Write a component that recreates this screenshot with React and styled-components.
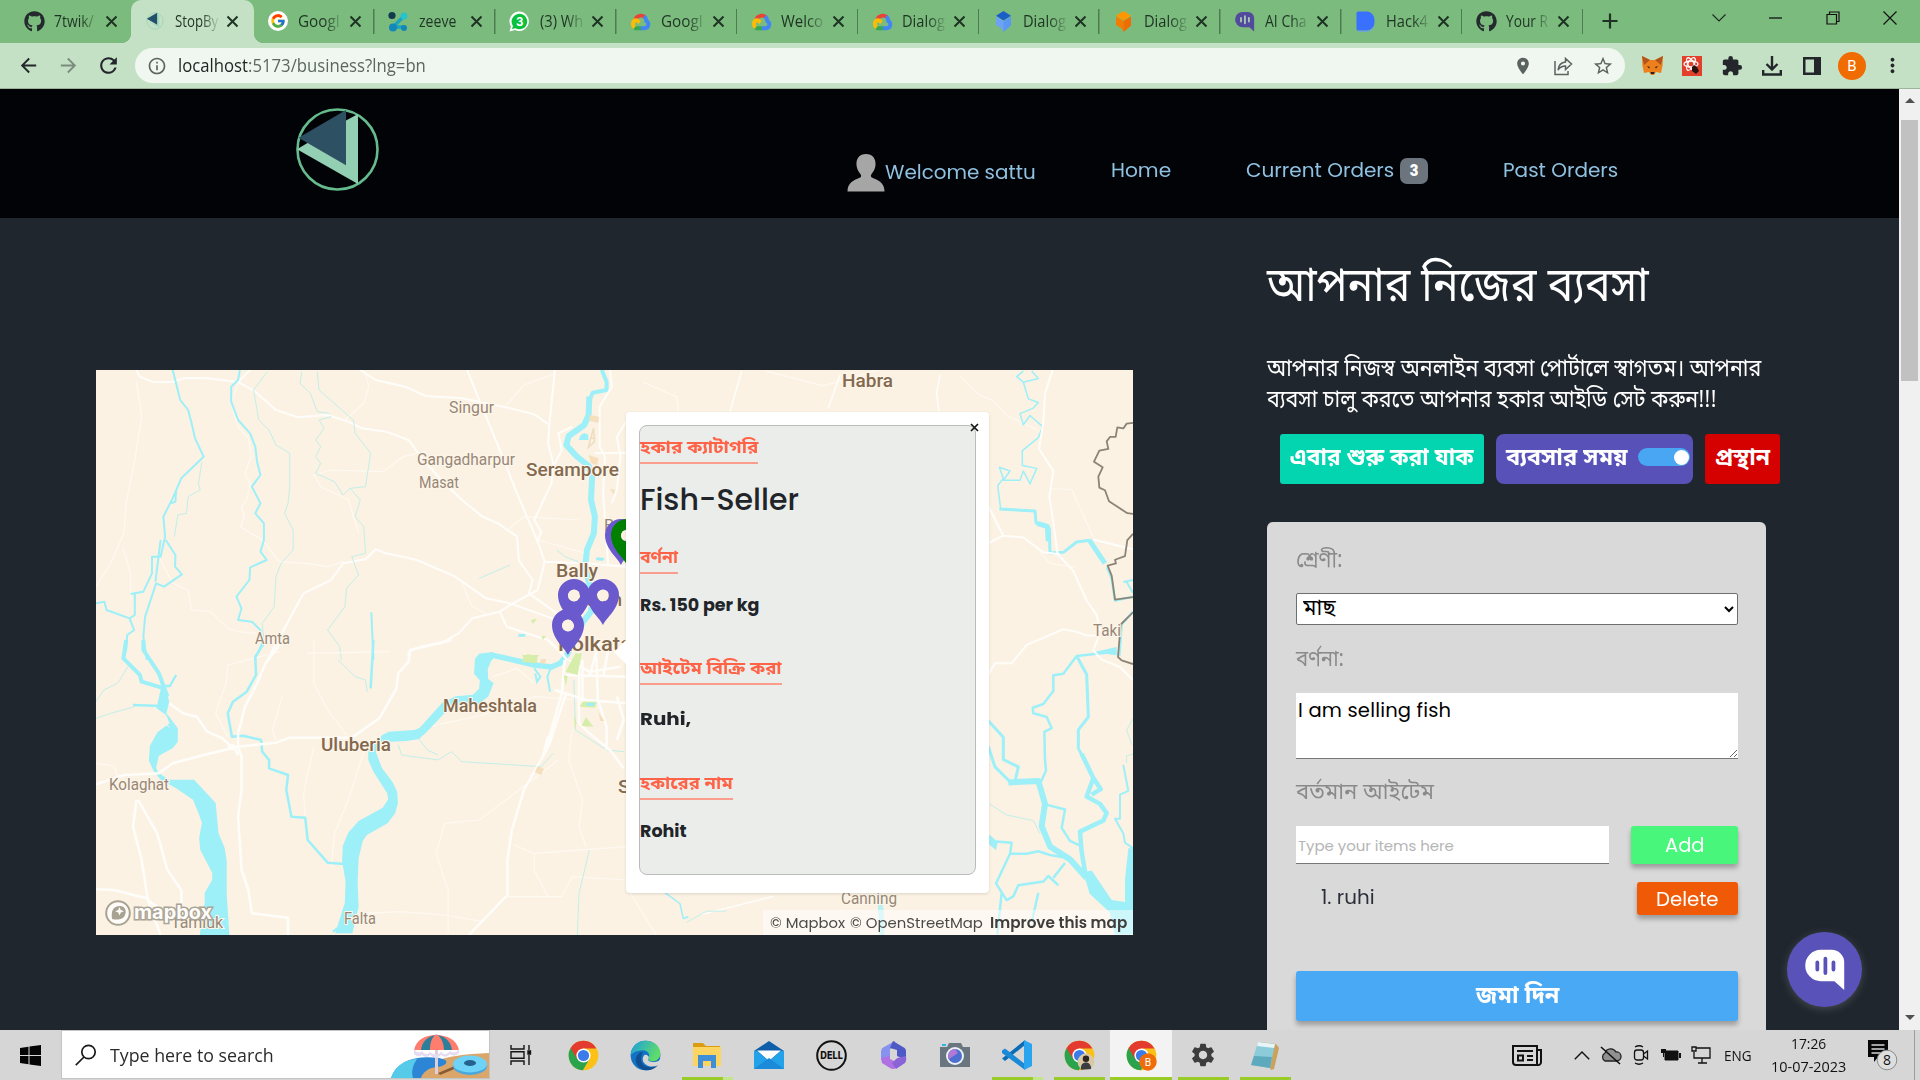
import React, { useLayoutEffect, useRef, useState } from "react";
import styled, { createGlobalStyle, css } from "styled-components";
import { FaGithub } from "react-icons/fa";
import { FcGoogle } from "react-icons/fc";
import {
  MdArrowBack,
  MdArrowForward,
  MdRefresh,
  MdInfoOutline,
  MdLocationOn,
  MdStarBorder,
  MdExtension,
  MdMoreVert,
  MdSettings,
} from "react-icons/md";

const poppins = `Poppins, Inter, "Nirmala UI", "Noto Sans Bengali", sans-serif`;
const bengali = `"Nirmala UI", "Noto Sans Bengali", "Noto Sans", sans-serif`;
const segoe = `"Segoe UI", "Open Sans", "Noto Sans", sans-serif`;

const GlobalStyle = createGlobalStyle`
  * { box-sizing: border-box; }
  html, body { margin: 0; padding: 0; overflow: hidden; background: #20262e; }
  body { font-family: ${poppins}; }
  svg { display: block; flex: none; }
`;

/* ---------- text set to an exact measure ---------- */

const Measure = styled.span`
  display: inline-block;
  width: ${(p) => p.$w}px;
  white-space: nowrap;
  text-align: left;
  vertical-align: baseline;
`;
const Glyphs = styled.span`
  display: inline-block;
  white-space: nowrap;
  transform-origin: 0 50%;
`;

function Fit({ w, children }) {
  const ref = useRef(null);
  const [scale, setScale] = useState(1);
  useLayoutEffect(() => {
    const natural = ref.current.offsetWidth;
    if (natural) setScale(w / natural);
  }, [w]);
  return (
    <Measure $w={w}>
      <Glyphs ref={ref} style={{ transform: `scaleX(${scale})` }}>
        {children}
      </Glyphs>
    </Measure>
  );
}

/* ---------- browser chrome ---------- */

const Screen = styled.div`
  width: 1920px;
  height: 1080px;
  display: flex;
  flex-direction: column;
  overflow: hidden;
  position: relative;
`;
const TabStrip = styled.div`
  height: 43px;
  flex: none;
  background: #7bbb7d;
  display: flex;
  padding-left: 10px;
`;
const TabItem = styled.div`
  width: ${(p) => p.$w || 120.85}px;
  height: 43px;
  flex: none;
  display: flex;
  align-items: center;
  padding: 0 0 1px 14px;
  position: relative;
  font: 16px/24px ${segoe};
  color: #1f3324;
  ${(p) =>
    p.$active &&
    css`
      width: 123px;
      background: #c5e1c5;
      border-radius: 10px 10px 0 0;
      &::before,
      &::after {
        content: "";
        position: absolute;
        bottom: 0;
        width: 10px;
        height: 10px;
      }
      &::before {
        left: -10px;
        background: radial-gradient(circle at 0 0, transparent 10px, #c5e1c5 10.5px);
      }
      &::after {
        right: -10px;
        background: radial-gradient(circle at 100% 0, transparent 10px, #c5e1c5 10.5px);
      }
    `}
  ${(p) =>
    p.$rule &&
    css`
      background: linear-gradient(#4d7c52, #4d7c52) right 9px / 1.5px 25px no-repeat;
    `}
`;
const TabTitle = styled.span`
  width: 44px;
  margin-left: 10px;
  white-space: nowrap;
  height: 24px;
  ${(p) =>
    !p.$whole &&
    css`
      -webkit-mask-image: linear-gradient(90deg, #000 60%, rgba(0, 0, 0, 0.15) 97%);
      mask-image: linear-gradient(90deg, #000 60%, rgba(0, 0, 0, 0.15) 97%);
    `}
`;
const TabClose = styled.svg`
  margin-left: 7px;
`;
const WindowTools = styled.div`
  display: flex;
  flex: 1;
`;
const WindowButton = styled.div`
  width: 57px;
  height: 36px;
  flex: none;
  display: flex;
  align-items: center;
  justify-content: center;
`;
const NewTab = styled.div`
  width: 54px;
  height: 42px;
  flex: none;
  margin-right: 53px;
  display: flex;
  align-items: center;
  justify-content: center;
`;
const Toolbar = styled.div`
  height: 46px;
  flex: none;
  background: #c5e1c5;
  border-bottom: 1px solid #9bb49b;
  display: flex;
  align-items: center;
  padding-left: 8px;
  color: #23272b;
`;
const ToolIcon = styled.div`
  width: 40px;
  height: 40px;
  display: flex;
  align-items: center;
  justify-content: center;
  flex: none;
  opacity: ${(p) => (p.$dim ? 0.45 : 1)};
`;
const Omnibox = styled.div`
  width: 1490px;
  height: 35px;
  flex: none;
  border-radius: 18px;
  background: #f0f7f0;
  display: flex;
  align-items: center;
  padding: 0 2px 0 12px;
  margin: 0 7px;
  color: #5b6360;
`;
const Address = styled.div`
  flex: 1;
  margin-left: 11px;
  margin-top: -2px;
  font: 18px/26px ${segoe};
  color: #5d6661;
  b {
    font-weight: 400;
    color: #1d2421;
  }
`;
const Avatar = styled.div`
  width: 28px;
  height: 28px;
  border-radius: 50%;
  background: #f06c00;
  color: #fff;
  font: 15px/28px Roboto, sans-serif;
  text-align: center;
`;

/* ---------- page ---------- */

const Viewport = styled.div`
  height: 941px;
  flex: none;
  display: flex;
  overflow: hidden;
`;
const Page = styled.div`
  width: 1899px;
  flex: none;
  background: #20262e;
  overflow: hidden;
`;
const NavBar = styled.header`
  height: 129px;
  background: #010307;
  display: flex;
  align-items: flex-start;
  padding: 18px 0 0 295px;
`;
const NavLinks = styled.nav`
  display: flex;
  align-items: center;
  margin: 45px 0 0 468px;
  color: #8fc1e0;
  font: 19.5px/30px ${poppins};
`;
const NavLink = styled.a`
  display: flex;
  align-items: center;
  padding-top: ${(p) => p.$drop || 0}px;
  margin-right: ${(p) => p.$gap}px;
  height: 38px;
`;
const Badge = styled.span`
  width: 28px;
  height: 26px;
  border-radius: 7px;
  margin-left: 6px;
  background: #6c757d;
  color: #fff;
  font: 700 15px/26px ${poppins};
  text-align: center;
`;
const Main = styled.main`
  display: flex;
  align-items: flex-start;
`;
const MapFrame = styled.section`
  width: 1037px;
  height: 565px;
  margin: 152px 134px 0 96px;
  flex: none;
  position: relative;
  overflow: hidden;
  background: #fbf2e4;
`;
const Popup = styled.article`
  position: absolute;
  left: 530px;
  top: 42px;
  width: 363px;
  height: 481px;
  background: #fff;
  border-radius: 4px;
  padding: 13px 13px 0;
  box-shadow: 0 1px 3px rgba(0, 0, 0, 0.12);
  &::before {
    content: "";
    position: absolute;
    left: -12px;
    top: 228px;
    border: 12px solid transparent;
    border-left: 0;
    border-right-color: #fff;
  }
`;
const PopupClose = styled.svg`
  position: absolute;
  right: 10px;
  top: 11px;
`;
const PopupBody = styled.div`
  width: 337px;
  height: 450px;
  background: #ebedea;
  border: 1.5px solid #babcba;
  border-radius: 8px;
  color: #212529;
`;
const PopupLabel = styled.div`
  height: ${(p) => p.$h}px;
  padding-top: ${(p) => p.$top}px;
  font: 700 18px/26px ${bengali};
  color: #ff6347;
`;
const PopupRule = styled.span`
  display: inline-block;
  border-bottom: 2px solid #fa9d8c;
  height: 29px;
`;
const PopupValue = styled.div`
  height: ${(p) => p.$h}px;
  padding-top: ${(p) => p.$top || 0}px;
  font: ${(p) => (p.$large ? "500 30px/36px " : "700 17.5px/24px ")} ${poppins};
`;
const Attribution = styled.div`
  position: absolute;
  right: 0;
  bottom: 0;
  width: 370px;
  height: 25px;
  background: rgba(255, 255, 255, 0.5);
  font: 15px/25px ${poppins};
  color: #4b4a48;
  padding-left: 7px;
  display: flex;
  gap: 5px;
  b {
    font-weight: 600;
    margin-left: 2px;
    color: #3f3e3c;
  }
`;
const Side = styled.section`
  width: 520px;
  flex: none;
`;
const Title = styled.h1`
  margin: 0;
  height: 129px;
  padding-top: 35px;
  font: 400 48.5px/72px ${bengali};
  color: #fff;
`;
const Intro = styled.p`
  margin: 0;
  height: 87px;
  padding-top: 8px;
  font: 24px/31px ${bengali};
  color: #fff;
`;
const Actions = styled.div`
  display: flex;
  gap: 12px;
  margin: 0 0 38px 13px;
`;
const ActionButton = styled.button`
  width: ${(p) => p.$w}px;
  height: 50px;
  flex: none;
  border: 0;
  padding: 0 0 4px 10px;
  border-radius: ${(p) => p.$r || 3}px;
  background: ${(p) => p.$bg};
  color: #fff;
  font: 700 23px/34px ${bengali};
  display: flex;
  align-items: center;
`;
const ActionText = styled.span`
  padding-top: 4px;
`;
const Toggle = styled.span`
  width: 52px;
  height: 18px;
  border-radius: 9px;
  background: #49a6f3;
  margin-left: 10px;
  padding-right: 1px;
  display: flex;
  justify-content: flex-end;
  align-items: center;
  &::after {
    content: "";
    width: 15px;
    height: 15px;
    border-radius: 50%;
    background: #fff;
  }
`;
const Card = styled.form`
  width: 499px;
  height: 560px;
  background: #d9d9d9;
  border-radius: 6px;
  padding: 0 28px 0 29px;
`;
const FieldLabel = styled.label`
  display: block;
  height: ${(p) => p.$h}px;
  padding-top: ${(p) => p.$top}px;
  font: 23px/34px ${bengali};
  color: #8a8a8a;
`;
const Select = styled.select`
  display: block;
  width: 442px;
  height: 32px;
  border: 1px solid #6f6f6f;
  border-radius: 2px;
  background: #fff;
  color: #000;
  padding: 0 0 0 2px;
  font: 22px/28px ${bengali};
`;
const TextArea = styled.textarea`
  display: block;
  width: 442px;
  height: 66px;
  border: 0;
  border-bottom: 1px solid #777;
  outline: 0;
  padding: 3px 2px 2px;
  margin: 0;
  font: 19.5px/30px ${poppins};
  letter-spacing: 0.2px;
  color: #000;
`;
const Row = styled.div`
  display: flex;
  justify-content: space-between;
  align-items: flex-start;
  margin-bottom: ${(p) => p.$mb}px;
`;
const Input = styled.input`
  width: 313px;
  height: 38px;
  border: 0;
  border-bottom: 1px solid #777;
  padding: 2px 2px 0;
  font: 15px/24px ${poppins};
  letter-spacing: -0.05px;
  &::placeholder {
    color: #b5b5b5;
    opacity: 1;
  }
`;
const SolidButton = styled.button`
  width: ${(p) => p.$w}px;
  height: ${(p) => p.$h}px;
  border: 0;
  padding: ${(p) => p.$drop || 0}px 0 0;
  border-radius: 3px;
  background: ${(p) => p.$bg};
  color: #fff;
  box-shadow: 0 4px 5px rgba(0, 0, 0, 0.28);
  font: ${(p) => (p.$strong ? `700 23px/34px ${bengali}` : `20px/28px ${poppins}`)};
  display: flex;
  justify-content: center;
  align-items: center;
`;
const Item = styled.span`
  margin: 1px 0 0 25px;
  font: 19.5px/30px ${poppins};
  color: #2b2f38;
`;
const ChatButton = styled.button`
  position: absolute;
  left: 1787px;
  top: 932px;
  width: 75px;
  height: 75px;
  padding: 0;
  border: 0;
  border-radius: 50%;
  background: #5953b9;
  box-shadow: 0 2px 8px rgba(130, 130, 130, 0.4);
`;
const GlyphHolder = styled.span`
  display: flex;
  justify-content: center;
`;
const Scrollbar = styled.div`
  width: 21px;
  background: #f0f0f0;
  display: flex;
  flex-direction: column;
  align-items: center;
`;
const ScrollArrow = styled.div`
  width: 0;
  height: 0;
  border: 5px solid transparent;
  ${(p) =>
    p.$up
      ? css`
          margin: 6px 0 17px;
          border-bottom-color: #505050;
          border-top-width: 3px;
          height: 8px;
        `
      : css`
          margin-top: 634px;
          border-top-color: #505050;
        `}
`;
const ScrollThumb = styled.div`
  width: 17px;
  height: 261px;
  background: #c1c1c1;
`;

/* ---------- taskbar ---------- */

const Taskbar = styled.footer`
  height: 50px;
  flex: none;
  background: #d6d6d6;
  display: flex;
  color: #111;
  font: 15px/20px ${segoe};
`;
const StartCell = styled.div`
  width: 61px;
  flex: none;
  display: flex;
  align-items: center;
  justify-content: center;
`;
const SearchBox = styled.div`
  width: 429px;
  height: 49px;
  flex: none;
  background: #fff;
  border: 1px solid #c4c4c4;
  display: flex;
  align-items: center;
  padding-left: 13px;
  font: 18px/26px ${segoe};
  color: #2b2b2b;
`;
const SearchText = styled.span`
  margin: 0 auto 0 13px;
`;
const AppCell = styled.div`
  width: 62px;
  height: 50px;
  flex: none;
  display: flex;
  align-items: center;
  justify-content: center;
  background: ${(p) =>
    p.$mark === "front"
      ? "linear-gradient(#9acc28,#9acc28) 0 47px / 62px 3px no-repeat, #f3f3f3"
      : p.$mark === "run"
      ? "linear-gradient(#9acc28,#9acc28) 6px 47px / 51px 3px no-repeat"
      : p.$mark === "many"
      ? "linear-gradient(#9acc28,#9acc28) 6px 47px / 41px 3px no-repeat, linear-gradient(#c3e68a,#c3e68a) 47px 47px / 10px 3px no-repeat"
      : "none"};
`;
const Tray = styled.div`
  display: flex;
  align-items: center;
  flex: none;
  margin-left: 203px;
`;
const TrayCell = styled.div`
  width: ${(p) => p.$w || 30}px;
  display: flex;
  justify-content: center;
`;
const Clock = styled.div`
  width: 96px;
  line-height: 23px;
  display: flex;
  flex-direction: column;
  align-items: center;
`;
const DesktopEdge = styled.div`
  height: 50px;
  margin-left: 6px;
  border-left: 1px solid #9c9c9c;
`;

/* ---------- icons ---------- */

const CloudIcon = () => (
  <svg width="21" height="21" viewBox="0 0 24 24" fill="none" strokeWidth="4.4">
    <path d="M6 9.5A7 7 0 0 1 17 7" stroke="#ea4335" />
    <path d="M16 6.2c3 2 2.4 4 2.6 5.200 3.600 1.800 3 8.300-2 8.300H12" stroke="#4285f4" />
    <path d="M12.500 19.700H6.500l-2-1" stroke="#34a853" />
    <path d="M5.500 18.800C1.500 16 3.500 9.500 8 10.800l3 2.200" stroke="#fbbc05" />
  </svg>
);
const ZeeveIcon = () => (
  <svg width="21" height="21" viewBox="0 0 21 21">
    <path d="M5 16 16 5M6 16h10" stroke="#1aa5bd" strokeWidth="3.500" />
    <circle cx="4" cy="4.500" r="3.600" fill="#123a4c" />
    <circle cx="16" cy="5" r="3.500" fill="#28c3c9" />
    <circle cx="5" cy="16.500" r="4" fill="#1387b8" />
    <circle cx="16" cy="17" r="3" fill="#1387b8" />
  </svg>
);
const WhatsIcon = () => (
  <svg width="21" height="21" viewBox="0 0 21 21">
    <path d="M.5 20.500 2 15.500A9.700 9.700 0 1 1 6 19z" fill="#fff" />
    <path d="M3 18l1-3a7.800 7.800 0 1 1 2.500 2.300z" fill="#0ac03c" />
    <text x="10.700" y="14.500" fontFamily="Inter" fontWeight="700" fontSize="11.500" fill="#fff" textAnchor="middle">3</text>
  </svg>
);
const DialogIcon = ({ a, b, c }) => (
  <svg width="21" height="21" viewBox="0 0 21 21">
    <path d="M10.500 0 18 4.700 10.500 9.500 3 4.700z" fill={a} />
    <path d="M3 5.500 10.500 10V21L8.500 17.500 3 14z" fill={b} />
    <path d="M18 5.500 10.500 10V21L18 14.500z" fill={c} />
  </svg>
);
const BubbleIcon = ({ size = 21, body = "#514a9d", bars = "#a9c9b5" }) => (
  <svg width={size} height={size} viewBox="0 0 48 48">
    <path d="M20 2h12a14 14 0 0 1 14 14v31L35 37H20A17.500 17.500 0 0 1 20 2z" fill={body} />
    <path d="M16 16v8M25 12v16M34 16v8" stroke={bars} strokeWidth="4.200" strokeLinecap="round" />
  </svg>
);
const DevIcon = () => (
  <svg width="19" height="21" viewBox="0 0 19 21">
    <path d="M2 .5h8a8 8 0 0 1 8.500 8v3a8 8 0 0 1-8.500 8H2A1.500 1.500 0 0 1 .5 18V2A1.500 1.500 0 0 1 2 .5z" fill="#3970fd" />
    <path d="M2 20.300h9a8 8 0 0 0 7-5" fill="none" stroke="#6da3ee" />
  </svg>
);
const PageMark = () => (
  <svg width="18" height="18" viewBox="0 0 84 84">
    <circle cx="42" cy="42" r="38" fill="#c5e1c5" stroke="#9ad4b6" strokeWidth="4" />
    <path d="M4 42 62 74V16l-10-6v52z" fill="#a3dabd" />
    <path d="M4 32 52 4v56z" fill="#23506b" />
  </svg>
);
const CloseX = () => (
  <TabClose width="13" height="13" viewBox="0 0 13 13" stroke="#1f3324" strokeWidth="2">
    <path d="M1.500 1.500l10 10M11.500 1.500l-10 10" />
  </TabClose>
);
const Logo = () => (
  <svg width="84" height="84" viewBox="295 107 84 84">
    <circle cx="337.500" cy="149.500" r="40" fill="none" stroke="#66bb8e" strokeWidth="2.600" />
    <path d="M358 114v70l-61-34.700 10.500-6.300 38.500-22.500z" fill="#93cfb3" />
    <path d="M298.500 137.700 346 110v55.300z" fill="#2d5063" />
  </svg>
);
const Person = () => (
  <svg width="38" height="38" viewBox="0 0 38 38" fill="#a6a6a6">
    <path d="M19 0c6.500 0 10 4.500 9.500 11-.4 5-3 7.500-4.500 10-.5 2 .5 2.600 3 3.500 7 2.600 10.500 6.500 10.500 13H.5c0-6.500 3.500-10.400 10.500-13 2.500-.9 3.500-1.500 3-3.500-1.500-2.500-4.100-5-4.500-10C9 4.500 12.500 0 19 0z" />
  </svg>
);
const ChromeIcon = ({ size = 31, children }) => (
  <svg width={size} height={size} viewBox="0 0 48 48">
    <circle cx="24" cy="24" r="23" fill="#fbc116" />
    <path d="M4 12.500A23 23 0 0 0 23 47l10.500-18L24 24z" fill="#2ba24c" />
    <path d="M4 12.500 14 29.500 24 13h20A23 23 0 0 0 4 12.500z" fill="#e33b2e" />
    <circle cx="24" cy="24" r="11" fill="#fff" />
    <circle cx="24" cy="24" r="8.700" fill="#3b7bea" />
    {children}
  </svg>
);
const EdgeIcon = () => (
  <svg width="31" height="31" viewBox="0 0 48 48">
    <defs>
      <linearGradient id="eg" x1="0" x2="1" y1="0" y2=".4">
        <stop offset="0" stopColor="#1b9de2" />
        <stop offset="1" stopColor="#5fdc6a" />
      </linearGradient>
    </defs>
    <circle cx="24" cy="24" r="23" fill="#1272c4" />
    <path d="M1 24C2 9 12 1 24 1c13 0 23 8 23 20 0 8-6 12-12 12-5 0-8-2-6-5 3-6-2-12-9-12C9 16 2 22 1 24z" fill="url(#eg)" />
    <path d="M17 30c0 8 8 13 17 12 4 0 8-2 10-4-4 6-11 9-19 9C15 46 8 38 9 29c1-6 5-10 11-11-2 3-3 7-3 12z" fill="#114f93" />
    <path d="M29 28c-3 4 2 6 6 6 5 0 9-1 12-4l1 5-5 4c-8 4-20 2-23-7-1-4 1-8 3-9 5 0 7 3 6 5z" fill="#d6d6d6" />
  </svg>
);
const FolderIcon = () => (
  <svg width="30" height="28" viewBox="0 0 30 28">
    <path d="M1 2h10l3 3h14v7H1z" fill="#dc9c12" />
    <path d="M1 6h28v19H1z" fill="#fcd462" />
    <path d="M6 14h18v13h-5v-7h-8v7H6z" fill="#3f8fd8" />
  </svg>
);
const MailIcon = () => (
  <svg width="32" height="30" viewBox="0 0 32 30">
    <path d="M1 11 16 1l15 10v18H1z" fill="#0f5ea9" />
    <path d="M4 10.500h24L16 21z" fill="#fff" />
    <path d="M1 11l3-.3L16 21l12-10.300 3 .3v18H1z" fill="#23a2ea" />
    <path d="M1 29l15-11 15 11z" fill="#1b8bd9" />
  </svg>
);
const DellIcon = () => (
  <svg width="31" height="31" viewBox="0 0 31 31">
    <circle cx="15.500" cy="15.500" r="14.300" fill="none" stroke="#111" strokeWidth="2" />
    <text x="4.300" y="19.300" textLength="22.500" lengthAdjust="spacingAndGlyphs" fontFamily="Inter" fontWeight="800" fontSize="10.500" fill="#111">DELL</text>
  </svg>
);
const OfficeIcon = () => (
  <svg width="28" height="30" viewBox="0 0 28 30">
    <path d="M16 1 5 7a5 5 0 0 0-3 4v9l7-2 2-1V9l5-3z" fill="#8791ee" />
    <path d="M14 1l10 6c2 1 3 2 3 4v9l-9-4v-6l-7-2z" fill="#4f59c6" />
    <path d="M2 18l9-2 8 4 8-3v4l-10 7q-3 2-6 0L3 23z" fill="#b072e2" />
    <path d="M27 16l-9 2-5 5 4 6 9-6q2-3 1-7z" fill="#8a63d6" />
    <path d="M11 11l3-2 4 2v7l-3 3-4-2z" fill="#d6d6d6" />
  </svg>
);
const CameraIcon = () => (
  <svg width="32" height="27" viewBox="0 0 32 27">
    <path d="M10 1h12l2 4h7v20H1V5h7z" fill="#69757f" />
    <circle cx="16" cy="14" r="9" fill="#eef1f3" />
    <circle cx="16" cy="14" r="7" fill="#4c6fd0" />
    <path d="M16 7a7 7 0 0 0-6 10l9-6z" fill="#b178d8" />
    <path d="M3 2h4v2H3z" fill="#2fb5e8" />
  </svg>
);
const CodeIcon = () => (
  <svg width="32" height="32" viewBox="0 0 32 32">
    <path d="M1 19.500 4 22 24 6V1z" fill="#0b6db5" />
    <path d="M1 11.500 4 9.500 24 25v6L1 14z" fill="#1a8ad8" />
    <path d="M23 1l8 4v22l-8 4z" fill="#2aa4ee" />
  </svg>
);
const NotepadIcon = () => (
  <svg width="30" height="32" viewBox="0 0 30 32">
    <path d="M9 3 26 5l3 4-5 21-3 1z" fill="#c9a25e" />
    <path d="M8 3l17 2-5 24L1 26z" fill="#8ccbd9" />
    <path d="M8 3l17 2-1 4L7 7z" fill="#e8f5f7" />
    <path d="M4 17l18 1-2 11L1 26z" fill="#5da9bd" />
  </svg>
);
const BeachArt = () => (
  <svg width="98" height="47" viewBox="0 0 98 47">
    <path d="M28 47c2-14 20-23 70-25v25z" fill="#dba66a" />
    <path d="M0 47C6 30 24 24 48 27c12 2 8 8-2 9-9 1-14 5-16 11z" fill="#2c86d5" />
    <path d="M0 47C4 34 16 28 26 28c-4 6-6 12-4 19z" fill="#55cbe9" />
    <path d="M47 42 66 34v3L49 44z" fill="#8a5a33" />
    <path d="M44 3h3v40h-3z" fill="#ded0da" />
    <path d="M23 19C25 9 34 4 45 4s21 5 23 15z" fill="#ff7d6c" />
    <path d="M30 19c1-8 6-13 14-15-4 4-5 9-5 15zM47 4c8 2 13 7 14 15h-8c0-6-2-11-6-15z" fill="#2b7f9b" />
    <path d="M23 18q4 6 8 2 4 6 8 1 6 5 11 0 5 5 9-1 5 4 9-2v4q-5 5-9 1-4 5-9 1-5 5-11 0-4 4-8 0-4 3-8-1z" fill="#e6dcf2" />
    <ellipse cx="79" cy="35" rx="17" ry="9" fill="#45a8e0" />
    <ellipse cx="79" cy="33" rx="17" ry="8.500" fill="#6fd2f7" />
    <ellipse cx="79" cy="32" rx="6" ry="3" fill="#24618d" />
  </svg>
);

/* ---------- map drawing ---------- */

const MapSvg = styled.svg`
  path {
    vector-effect: non-scaling-stroke;
  }
  text {
    font-family: Roboto, "Noto Sans", sans-serif;
    paint-order: stroke;
    stroke: #fdf6ea;
    stroke-width: 2px;
  }
`;
const WATER = "#9deff8";
const Stream = ({ d, w = 1.5 }) => <path d={d} fill="none" stroke={WATER} strokeWidth={w} strokeLinejoin="round" />;
const Creek = ({ d }) => <path d={d} fill="none" stroke="#c3efe8" strokeWidth="1" />;
const Road = ({ d, w = 1.5 }) => <path d={d} fill="none" stroke="#fffdfa" strokeWidth={w} strokeLinejoin="round" />;
const Lane = ({ d }) => <path d={d} fill="none" stroke="#fef9f1" strokeWidth="1.200" />;
const Border = ({ d }) => <path d={d} fill="none" stroke="#8c8477" strokeWidth="1.800" strokeLinejoin="round" />;
const Place = ({ x, y, w, size = 16, bold, children }) => (
  <text x={x} y={y} textLength={w} lengthAdjust="spacingAndGlyphs" fontSize={size} fontWeight={bold ? 500 : 400} fill={bold ? "#84694e" : "#988776"}>
    {children}
  </text>
);
const Pin = ({ x, y, color = "#6a5acd" }) => (
  <g transform={`translate(${x} ${y})`}>
    <path
      fillRule="evenodd"
      fill={color}
      d="M0 0C-3-7-16-16-16-30a16 16 0 0 1 32 0C16-16 3-7 0 0zM0-35.500a6 6 0 1 0 0 12 6 6 0 0 0 0-12z"
    />
    <circle cx="0" cy="-29.500" r="5.800" fill="#fbf2e4" />
  </g>
);

const MapDrawing = () => (
  <MapSvg width="1037" height="565" viewBox="0 0 1037 565">
    <g transform="translate(-6 -10) scale(.34438 .33333)">
      <Lane d="M135 65 150 170 130 300 105 430 98 520 60 610 17 680M95 560 118 640 118 720M430 70 410 130 430 200 460 235 468 290 450 340 465 370 455 420 440 440 448 470 437 500 500 540 550 605 630 610 690 620 735 605M200 590 240 670 285 690 295 750 350 755 400 805 430 815 480 820M800 40 810 80 795 130 740 180 680 165M1350 40 1260 75 1210 135M650 345 700 330 850 335 910 290 975 275M650 345 670 380 750 420 780 520M1210 510 1260 470 1420 480M1300 540 1440 580M1080 670 1110 740 1150 760" />
      <Stream w={4} d="M1486 30 1500 65 1500 90 1460 98 1448 125" />
      <Stream w={6} d="M1450 110 1448 165 1435 195 1390 228 1383 255 1412 288 1448 318 1458 350 1455 420 1466 470 1463 520 1443 570 1438 620 1447 660 1458 710 1455 755 1432 785 1385 885" />
      <path d="M1425 225l10-6 12 5v16h-28zM1470 592l24 2-4 8-20-1zM1244 822h20v8h-20z" fill={WATER} />
      <Road w={2} d="M135 30 145 50 180 65 240 66 270 55 340 55 430 66 480 95 540 150 605 172 690 165 750 185 790 205 860 215 925 240 960 290 1020 360 1080 420 1140 470 1185 490 1240 530 1245 600 1285 660 1275 700 1380 778M430 66 465 30M785 30 830 60 915 80 975 108 1080 115 1200 140 1290 163 1335 195M1095 30 1130 120 1190 270 1240 400 1300 545 1320 605 1300 690 1220 735 1190 755 1110 775 1070 820 1020 850 960 860 925 875 925 900M1350 30 1335 180 1330 250 1345 310 1340 370 1290 480 1310 515 1300 545M1320 605 1440 610 1560 620M515 900 620 700 700 660 735 610 800 598 830 568 860 580 950 600 1060 650 1150 715 1220 730 1350 778M1190 755 1210 800 1330 840 1380 890M1510 30 1515 80 1480 140 1480 260 1495 290 1490 400 1505 620M1560 278 1465 280M1345 320 1370 270 1360 220 1400 200M1560 180 1530 230 1540 290 1530 390 1515 430" />
      <Creek d="M515 35 475 90 490 180 520 210 540 255 580 280 580 380 575 430 565 460 590 510 590 570 555 610 540 650 535 740 500 790 505 840M615 35 610 70 640 100 660 155 695 160M660 35 665 90 720 140 765 180 770 220 815 280 800 380 755 385 735 405 710 365 655 340 670 310 655 290 670 260 655 240 680 205 665 180 700 170M755 385 785 420 770 470 795 500 800 580 760 590 780 645 745 685 740 740 690 810 725 860 730 900M325 305 315 370 320 390 285 410 280 460 255 465 245 530M1130 655 1220 615M1355 570 1380 590 1430 610" />
      <Stream w={2} d="M240 30 250 70 262 120 285 150 295 190 305 235 330 290 265 355 240 415 213 470 218 530 205 590 180 590 180 640 155 695 118 702M220 540 248 585 247 620 267 643 215 680 192 670 160 770 155 830 165 900M250 390 248 425 235 430M17 730 42 725 48 750 115 775 128 810 108 825 105 870 95 900M130 702 130 765 115 775M205 540 190 665" />
      <Stream w={2} d="M435 30 430 60 410 80 410 125 430 180 465 220 480 260 485 305 495 345 470 380 495 430 480 460 505 490 505 540 495 575 513 600 465 622 463 660 425 710 440 745 430 780 470 785 495 810 500 850 478 900M817 757 823 900" />
      <path d="M1450 165l28 5-2 18-25-5zM1447 285l30 10-5 20-15-3zM1510 387l14 2-3 15z" fill="#f5dfbd" />
      <path d="M1462 205 1447 262 1465 245zM1455 235h12" fill="none" stroke="#eedcc0" strokeWidth="1.500" />
      <path d="M1280 780l18-4-12 16zM1255 885l50 0-15 15h-30zM1310 828l14 0-8 12z" fill="#d7edaa" />
    </g>
    <g transform="translate(-6 270) scale(.34438 .33333)">
      <Lane d="M550 35 400 75 395 130 365 220 400 290M650 0 650 130 690 210 745 285M630 40 870 35M558 170 530 270 540 300M650 320 620 460 625 530M800 320 750 480 710 580 700 680M17 370 70 378 80 410M1130 540 1360 360M1130 540 1030 550 1005 640 1040 750 1040 880M1230 615 1290 640 1560 620M1290 640 1290 690 1330 770M1210 770 1370 770 1400 710 1560 720M1400 270 1390 360 1430 480 1420 560 1440 620M790 820 900 815 1030 825 1140 845M960 265 1140 225 1290 170 1560 190M1170 110 1240 85 1290 130" />
      <Creek d="M110 80 80 130 40 150 17 185M17 235 60 220 130 200M720 60 770 110 800 120 805 155M895 315 905 345 1010 360 1050 335 1080 365 1310 380 1345 340M950 290 980 330 1010 345M1405 120 1410 270 1500 330 1550 335M1450 630 1420 760 1415 885" />
      <Stream w={4} d="M105 0 97 55 145 105 150 125 215 145M155 0 155 30 200 100 225 170" />
      <Stream w={2.500} d="M125 195 210 198M250 105 232 138 210 138M505 10 480 50 482 105 455 155 415 185 400 220 412 290 445 287 497 300 500 335 520 360 520 385 575 405 570 450 585 530 625 533 632 600 690 668 740 672M823 0 815 145M705 875 740 850" />
      <path d="M205 130l20 35 5 20-8 35 33 45 0 40-15 20-40 22-8 35 5 15 15 10 18 12h72l18 20 45 50 8 90 18 45 6 40 0 100 8 125H318l15-100 0-30 22-40 0-20-35-70-3-35 8-45-10-30-16-40-50-35-44-25-20-25-14-32 3-45 22-40 35-27-10-25-28-20 12-55 3-40z" fill={WATER} />
      <path d="M213 225l10 25 10 15-18-15z" fill="#fbf2e4" />
      <Stream w={5.500} d="M1388 40 1365 70 1340 81 1290 75 1230 60 1170 46 1140 50" />
      <path d="M1170 36l-40 5-12 15-3 45 17 20-2 25-18 18-50 5-40 20-65 75-15 6-75 5-22 12-5 20 80-4 35-6 22-20 55-60 40-18 55-5 30-25 15-40-16-12-1-30 10-25 15-15z" fill={WATER} />
      <path d="M832 300l-24 35 0 25 15 35 40 65 3 18-16 25-70 40-30 35-16 40-2 45 10 60-2 65-28 92 h50l18-80-3-70 3-75 12-52 12-18 60-35 22-30 8-30-2-35-14-30-30-40-18-50 8-18z" fill={WATER} />
      <path d="M1290 85l18 25-10 15-5-25M1340 80l-12 30 8 45" fill="none" stroke={WATER} strokeWidth="2" />
      <Road w={2.500} d="M17 433 100 405 200 400 240 370 330 345 430 320 540 308 580 293 760 293 840 235 890 145 895 100 925 65 930 30 1050 0M230 190 270 220 310 230 340 275 385 295 410 320 430 320 430 280 450 200 485 130 510 70 560 0M430 320 440 350 440 450 430 530 440 690 460 750 470 820 575 833 575 885M135 480 125 560 150 660 168 780 205 885M140 480 195 580 225 690 265 750 268 860M17 748 70 750 165 775 180 790 285 860 M400 322 415 315 430 345" />
      <Road w={2.500} d="M1100 885 1212 765 1212 660 1225 570 1260 450 1320 340 1370 160 1378 60M1382 160 1335 310 1315 350 1330 290M1378 105 1560 110M1420 30 1420 250 1450 280 1510 330 1550 385M1470 50 1475 180 1500 260 1500 330M1350 150 1440 180 1560 190M1390 60 1450 95 1540 80M1430 60 1430 190M1480 0 1450 110M1510 0 1490 110M1530 170 1550 240 1530 300M1330 0 1370 40 1385 60" />
      <path d="M1255 62l15-20 30 8-3 20-42-5zM1410 40h18l-12 65-35-10zM1375 105l12 3-5 30zM1440 232l22 28-35-2zM1405 225l8 25-5 16zM1430 185h42l-5 18-45-3z" fill="#d7edaa" />
      <path d="M1442 188h24l-3 10h-21z" fill={WATER} />
      <path d="M1300 378l18 8-8 20-18-10zM1310 57l15 0-4 14-14-2zM1476 215l18 28h-12z" fill="#f5dfbd" />
    </g>
    <g transform="translate(444 -10) scale(.33333 .36991)">
      <Lane d="M310 60 410 100 415 140M680 30 850 70 1040 20M380 1600 270 1440 300 1200" />
      <Road d="M605 30 570 140M900 40 865 130M1200 40 1190 90 1197 140M860 140 835 170M480 1500 700 1450" w={1.500} />
      <Stream d="M375 1440 420 1470 430 1510 445 1505" />
      <Creek d="M440 1520 500 1490 560 1490" />
      <path d="M1020 1440l10 40 5 110h-20l3-60-5-60z" fill={WATER} opacity=".7" />
    </g>
    <g transform="translate(864 -10) scale(.33333 .36991)">
      <Lane d="M0 45 60 95 100 110 140 150 235 190M270 348 335 350 380 440 400 480M240 520 270 550 345 560M0 1200" />
      <Stream d="M190 30 170 45 190 60 235 50 215 30M190 60 205 105 235 115 220 130 180 145 190 175 210 150 248 180 235 210 187 245 187 285 230 293 210 335 190 300 180 325 130 325 150 300 118 290 130 320 113 340 122 402" w={1.500} />
      <Stream w={3} d="M118 403 225 408 228 440 268 455 270 522 310 520 350 492 390 487" />
      <Stream w={5} d="M232 442 262 450 265 490M388 487 435 550" />
      <Stream w={2.500} d="M519 640 465 650 455 590 441 560M519 680 485 715 478 800M470 788 350 800 310 848 280 852 280 895 250 930 218 940 220 955 260 965 275 995 253 1005 255 1080 258 1110 243 1140" />
      <path d="M400 790l70-14v22z" fill={WATER} />
      <Road w={2} d="M278 27 255 90 250 170 237 240 280 300 268 370 280 440 293 525 340 570 380 650 410 690 420 730M85 495 130 475 190 480 250 520 300 525M400 485 519 512M85 395 130 475M85 850 105 820 155 820 200 770 310 728 350 735 380 745 415 745M415 750 400 785 425 810 480 830 519 865" />
      <Stream w={3} d="M350 800 380 850 385 965 355 1000 355 1050 390 1110" />
      <Stream w={4.500} d="M365 1065 400 1130 380 1180 420 1200 440 1225 430 1245 360 1275 365 1330 378 1400M400 1130 422 1160 395 1175" />
      <Stream w={3} d="M85 975 130 1020 130 1080 175 1100 165 1140M85 1045 105 1100 150 1140" />
      <Stream w={6} d="M145 1142 235 1138 255 1200 245 1260 270 1315 330 1350 380 1400" />
      <Stream w={2.500} d="M250 1200 315 1215 305 1265 330 1300 365 1315M88 1300 155 1305 150 1335 200 1335 235 1328 270 1338 315 1345M150 1335 108 1415 140 1460 160 1450 175 1420 250 1410 265 1395 295 1420M315 1360 280 1400M125 1440 112 1553M235 1440 215 1520" />
      <path d="M370 1385l25-5 60 80 40 5 0-60 10-85 14 0v233h-55l-15-60-60-50z" fill={WATER} />
      <Stream w={2} d="M490 1095 505 1165 480 1175 480 1240 465 1240 490 1280 495 1305 519 1320M490 600 519 595M500 600 519 630" />
      <path d="M88 1283l25 20-5 22-20-15z" fill={WATER} />
      <Creek d="M519 970 500 1000 515 1040M500 1090 500 1070 519 1065M88 1200 140 1230 220 1245 240 1280" />
      <Border d="M519 170 500 172 490 185 472 182 467 208 450 208 440 220 445 240 418 245 402 275 428 290 415 315 418 345 435 352 447 382 502 414 519 416M519 470 502 487 495 530 465 540 468 550 443 556 455 583 465 648 519 641M519 682 482 715 474 803 485 812 519 822" />
    </g>
    <Place x={353} y={43} w={45}>Singur</Place>
    <Place x={321} y={95} w={98}>Gangadharpur</Place>
    <Place x={323} y={118} w={40}>Masat</Place>
    <Place x={430} y={106} w={93} size={18.500} bold>Serampore</Place>
    <Place x={746} y={17} w={51} size={18} bold>Habra</Place>
    <Place x={460} y={207} w={42} size={18.500} bold>Bally</Place>
    <Place x={508} y={161} w={42}>Baran</Place>
    <Place x={479} y={236} w={47} size={18} bold>South</Place>
    <Place x={462} y={281} w={74} size={21} bold>Kolkata</Place>
    <Place x={159} y={274} w={35}>Amta</Place>
    <Place x={347} y={342} w={94} size={18.500} bold>Maheshtala</Place>
    <Place x={225} y={381} w={70} size={18.500} bold>Uluberia</Place>
    <Place x={13} y={420} w={60}>Kolaghat</Place>
    <Place x={75} y={558} w={52}>Tamluk</Place>
    <Place x={248} y={554} w={32}>Falta</Place>
    <Place x={522} y={423} w={80} size={18.500} bold>Sonarpur</Place>
    <Place x={745} y={534} w={56}>Canning</Place>
    <Place x={997} y={266} w={28}>Taki</Place>
    <Pin x={525} y={195} />
    <Pin x={531} y={195} color="#008000" />
    <Pin x={478} y={255} />
    <Pin x={507} y={255} />
    <Pin x={472} y={285} />
    <g>
      <circle cx="22" cy="543" r="11.800" fill="#fffdf9" stroke="#a8a293" strokeWidth="2" />
      <path d="M16 549c-1-8 1-13 8-13 5 0 7 5 5 9-2 5-8 5-13 4z" fill="#a8a293" />
      <path d="M23.500 537l1.300 3 3.200 1.200-3.200 1.200-1.300 3-1.300-3-3-1.200 3-1.200z" fill="#fffdf9" />
      <text x="38" y="549" textLength="78" lengthAdjust="spacingAndGlyphs" fontSize="19" fontWeight="700" style={{ fontFamily: "Inter", stroke: "#aaa496", fill: "#fffdf9", strokeWidth: 3 }}>mapbox</text>
    </g>
  </MapSvg>
);

/* ---------- data ---------- */

const tabs = [
  { title: "7twik/", w: 40, icon: <FaGithub size={21} color="#24292e" />, width: 121 },
  { title: "StopBy", w: 43, icon: <PageMark />, active: true },
  { title: "Googl", w: 42, icon: <FcGoogle size={20} />, white: true, rule: true },
  { title: "zeeve", w: 37, icon: <ZeeveIcon />, rule: true, whole: true },
  { title: "(3) Wh", w: 43, icon: <WhatsIcon />, rule: true },
  { title: "Googl", w: 42, icon: <CloudIcon />, rule: true },
  { title: "Welco", w: 42, icon: <CloudIcon />, rule: true },
  { title: "Dialog", w: 43, icon: <CloudIcon />, rule: true },
  { title: "Dialog", w: 43, icon: <DialogIcon a="#1a5fc7" b="#6da2f7" c="#5d97f5" />, rule: true },
  { title: "Dialog", w: 43, icon: <DialogIcon a="#ff9800" b="#f57c00" c="#ef6c00" />, rule: true },
  { title: "AI Cha", w: 42, icon: <BubbleIcon />, rule: true },
  { title: "Hack4", w: 42, icon: <DevIcon />, rule: true },
  { title: "Your R", w: 42, icon: <FaGithub size={21} color="#24292e" />, rule: true },
];

const FavHolder = styled.span`
  width: 20px;
  height: 24px;
  flex: none;
  display: flex;
  align-items: center;
  justify-content: center;
  svg {
    border-radius: ${(p) => (p.$white ? "50%" : 0)};
    background: ${(p) => (p.$white ? "#fff" : "none")};
    padding: ${(p) => (p.$white ? "2px" : 0)};
  }
`;

export default function App() {
  return (
    <Screen>
      <GlobalStyle />
      <TabStrip>
        {tabs.map((t, i) => (
          <TabItem key={i} $active={t.active} $rule={t.rule} $w={t.width}>
            <FavHolder $white={t.white}>{t.icon}</FavHolder>
            <TabTitle $whole={t.whole}>
              <Fit w={t.w}>{t.title}</Fit>
            </TabTitle>
            <CloseX />
          </TabItem>
        ))}
        <WindowTools>
          <NewTab>
            <svg width="16" height="16" viewBox="0 0 16 16" stroke="#1f3324" strokeWidth="2.200"><path d="M8 .5v15M.5 8h15" /></svg>
          </NewTab>
          <WindowButton>
            <svg width="14" height="8" viewBox="0 0 14 8" stroke="#1f2d22" fill="none" strokeWidth="1.200"><path d="M.5.500 7 7 13.500.5" /></svg>
          </WindowButton>
          <WindowButton>
            <svg width="13" height="2"><path d="M0 1h13" stroke="#111" strokeWidth="1.300" /></svg>
          </WindowButton>
          <WindowButton>
            <svg width="14" height="14" viewBox="0 0 14 14" stroke="#111" fill="none" strokeWidth="1.200"><path d="M1 3.500h9.500V13H1zM3.500 3.500V1H13v9.500h-2.500" /></svg>
          </WindowButton>
          <WindowButton>
            <svg width="14" height="14" viewBox="0 0 14 14" stroke="#111" strokeWidth="1.200"><path d="M.5.500l13 13M13.500.500l-13 13" /></svg>
          </WindowButton>
        </WindowTools>
      </TabStrip>

      <Toolbar>
        <ToolIcon><MdArrowBack size={23} /></ToolIcon>
        <ToolIcon $dim><MdArrowForward size={23} /></ToolIcon>
        <ToolIcon><MdRefresh size={25} /></ToolIcon>
        <Omnibox>
          <MdInfoOutline size={20} />
          <Address>
            <Fit w={248}><b>localhost</b>:5173/business?lng=bn</Fit>
          </Address>
          <ToolIcon><MdLocationOn size={20} /></ToolIcon>
          <ToolIcon>
            <svg width="20" height="20" viewBox="0 0 20 20" fill="none" stroke="#5b6360" strokeWidth="1.500">
              <path d="M2 5v13.500h13V15M5 14c.5-5 3-7.500 7.500-8V2.500L18.500 8l-6 5.500V10C9 10 7 11 5 14z" />
            </svg>
          </ToolIcon>
          <ToolIcon><MdStarBorder size={22} /></ToolIcon>
        </Omnibox>
        <ToolIcon>
          <svg width="21" height="20" viewBox="0 0 21 20">
            <path d="M0 0l8 4h5l8-4-.5 10-1.500 7-5-1-2 3H9l-2-3-5 1L.5 10z" fill="#ee7f1d" />
            <path d="M0 0l8 4-6 5zM21 0l-8 4 6 5z" fill="#b0541b" />
            <path d="M5 10l3 1-1 1.500zM16 10l-3 1 1 1.500zM8.500 16h4l-.5 2H9z" fill="#27221e" />
          </svg>
        </ToolIcon>
        <ToolIcon>
          <svg width="20" height="20" viewBox="0 0 20 20">
            <path d="M0 0h20v20H0z" fill="#e2402d" />
            <g fill="none" stroke="#fff" strokeWidth="1.300">
              <ellipse cx="9" cy="8" rx="7" ry="3" />
              <ellipse cx="9" cy="8" rx="7" ry="3" transform="rotate(60 9 8)" />
              <ellipse cx="9" cy="8" rx="7" ry="3" transform="rotate(120 9 8)" />
            </g>
            <path d="M10 11l2-2 3 2 2 4-3 3-4-3z" fill="#24130f" />
          </svg>
        </ToolIcon>
        <ToolIcon><MdExtension size={22} /></ToolIcon>
        <ToolIcon>
          <svg width="20" height="20" viewBox="0 0 20 20" fill="none" stroke="#23272b" strokeWidth="2.400">
            <path d="M10 0v13M4.500 8l5.500 5.500L15.500 8M1.200 14v4.500h17.600V14" />
          </svg>
        </ToolIcon>
        <ToolIcon>
          <svg width="18" height="18" viewBox="0 0 18 18"><path d="M0 0h18v18H0zM2.500 2.500v13H11v-13z" fillRule="evenodd" fill="#23272b" /></svg>
        </ToolIcon>
        <ToolIcon><Avatar>B</Avatar></ToolIcon>
        <ToolIcon><MdMoreVert size={23} /></ToolIcon>
      </Toolbar>

      <Viewport>
        <Page>
          <NavBar>
            <Logo />
            <NavLinks>
              <NavLink $gap={75} $drop={3}>
                <Person />
                <Fit w={151}>Welcome sattu</Fit>
              </NavLink>
              <NavLink $gap={75}><Fit w={60}>Home</Fit></NavLink>
              <NavLink $gap={75}>
                <Fit w={148}>Current Orders</Fit>
                <Badge>3</Badge>
              </NavLink>
              <NavLink $gap={0}><Fit w={115}>Past Orders</Fit></NavLink>
            </NavLinks>
          </NavBar>
          <Main>
            <MapFrame>
              <MapDrawing />
              <Popup>
                <PopupBody>
                  <PopupLabel $h={56} $top={9}><PopupRule><Fit w={118}>হকার ক্যাটাগরি</Fit></PopupRule></PopupLabel>
                  <PopupValue $large $h={55}><Fit w={159}>Fish-Seller</Fit></PopupValue>
                  <PopupLabel $h={56} $top={8}><PopupRule><Fit w={38}>বর্ণনা</Fit></PopupRule></PopupLabel>
                  <PopupValue $h={56}><Fit w={119}>Rs. 150 per kg</Fit></PopupValue>
                  <PopupLabel $h={56} $top={7}><PopupRule><Fit w={142}>আইটেম বিক্রি করা</Fit></PopupRule></PopupLabel>
                  <PopupValue $h={58} $top={2}><Fit w={51}>Ruhi,</Fit></PopupValue>
                  <PopupLabel $h={54} $top={8}><PopupRule><Fit w={93}>হকারের নাম</Fit></PopupRule></PopupLabel>
                  <PopupValue $h={26} $top={2}><Fit w={47}>Rohit</Fit></PopupValue>
                </PopupBody>
                <PopupClose width="9" height="9" viewBox="0 0 9 9" stroke="#111" strokeWidth="1.600"><path d="M1 1l7 7M8 1 1 8" /></PopupClose>
              </Popup>
              <Attribution>
                <Fit w={75}>© Mapbox</Fit>
                <Fit w={133}>© OpenStreetMap</Fit>
                <b><Fit w={137}>Improve this map</Fit></b>
              </Attribution>
            </MapFrame>
            <Side>
              <Title><Fit w={382}>আপনার নিজের ব্যবসা</Fit></Title>
              <Intro>
                <Fit w={494}>আপনার নিজস্ব অনলাইন ব্যবসা পোর্টালে স্বাগতম। আপনার</Fit>
                <br />
                <Fit w={450}>ব্যবসা চালু করতে আপনার হকার আইডি সেট করুন!!!</Fit>
              </Intro>
              <Actions>
                <ActionButton $w={204} $bg="#03d5b0"><ActionText><Fit w={184}>এবার শুরু করা যাক</Fit></ActionText></ActionButton>
                <ActionButton $w={197} $bg="#5751b8" $r={8}><ActionText><Fit w={122}>ব্যবসার সময়</Fit></ActionText><Toggle /></ActionButton>
                <ActionButton $w={75} $bg="#d50000"><ActionText><Fit w={55}>প্রস্থান</Fit></ActionText></ActionButton>
              </Actions>
              <Card>
                <FieldLabel $h={71} $top={22}><Fit w={47}>শ্রেণী:</Fit></FieldLabel>
                <Select defaultValue="fish"><option value="fish">মাছ</option></Select>
                <FieldLabel $h={68} $top={18}><Fit w={48}>বর্ণনা:</Fit></FieldLabel>
                <TextArea defaultValue="I am selling fish" />
                <FieldLabel $h={67} $top={17}><Fit w={138}>বর্তমান আইটেম</Fit></FieldLabel>
                <Row $mb={18}>
                  <Input placeholder="Type your items here" />
                  <SolidButton type="button" $w={107} $h={38} $bg="#48f67c"><Fit w={40}>Add</Fit></SolidButton>
                </Row>
                <Row $mb={56}>
                  <Item><Fit w={54}>1. ruhi</Fit></Item>
                  <SolidButton type="button" $w={101} $h={33} $bg="#f05a06"><Fit w={63}>Delete</Fit></SolidButton>
                </Row>
                <SolidButton type="button" $strong $drop={2} $w={442} $h={50} $bg="#49a9f4"><Fit w={83}>জমা দিন</Fit></SolidButton>
              </Card>
            </Side>
          </Main>
        </Page>
        <Scrollbar>
          <ScrollArrow $up />
          <ScrollThumb />
          <ScrollArrow />
        </Scrollbar>
      </Viewport>
      <ChatButton>
        <GlyphHolder><BubbleIcon size={43} body="#fff" bars="#5953b9" /></GlyphHolder>
      </ChatButton>

      <Taskbar>
        <StartCell>
          <svg width="21" height="21" viewBox="0 0 21 21"><path d="M0 3l8.500-1.200V10H0zM9.500 1.600 21 0v10H9.500zM0 11h8.500v8.200L0 18zM9.500 11H21v10L9.500 19.400z" fill="#050505" /></svg>
        </StartCell>
        <SearchBox>
          <svg width="22" height="22" viewBox="0 0 22 22" fill="none" stroke="#1a1a1a" strokeWidth="1.700"><circle cx="13.500" cy="8" r="6.700" /><path d="M9 13 .8 21.200" /></svg>
          <SearchText><Fit w={164}>Type here to search</Fit></SearchText>
          <BeachArt />
        </SearchBox>
        <AppCell>
          <svg width="22" height="20" viewBox="0 0 22 20" fill="none" stroke="#151515" strokeWidth="1.400">
            <path d="M1 0v4h13V0M1 6.700h13v6.600H1zM1 20v-4h13v4M19 0v5M19 10v10" /><path d="M18 6h2.500v3H18z" fill="#151515" />
          </svg>
        </AppCell>
        <AppCell><ChromeIcon /></AppCell>
        <AppCell><EdgeIcon /></AppCell>
        <AppCell $mark="many"><FolderIcon /></AppCell>
        <AppCell><MailIcon /></AppCell>
        <AppCell><DellIcon /></AppCell>
        <AppCell><OfficeIcon /></AppCell>
        <AppCell><CameraIcon /></AppCell>
        <AppCell $mark="many"><CodeIcon /></AppCell>
        <AppCell $mark="run">
          <ChromeIcon>
            <circle cx="34" cy="34" r="13" fill="#d8c9a4" />
            <path d="M26 46c0-8 3-11 8-11s8 4 8 10z" fill="#3a3d42" />
            <circle cx="34" cy="29" r="5" fill="#2c2520" />
          </ChromeIcon>
        </AppCell>
        <AppCell $mark="front">
          <ChromeIcon>
            <circle cx="34" cy="34" r="13.500" fill="#ef6c0b" />
            <text x="34" y="40" textAnchor="middle" fontFamily="Roboto" fontSize="16" fill="#fff">B</text>
          </ChromeIcon>
        </AppCell>
        <AppCell $mark="run"><MdSettings size={28} color="#3d3d3d" /></AppCell>
        <AppCell $mark="run"><NotepadIcon /></AppCell>
        <Tray>
          <TrayCell $w={56}>
            <svg width="30" height="21" viewBox="0 0 30 21" fill="none" stroke="#111" strokeWidth="2">
              <path d="M1 1h24v19H4a3 3 0 0 1-3-3zM25 5h4v12a3 3 0 0 1-4 3M5 6h16M15 11h6M15 15h6M6 10.500h5v5H6z" />
            </svg>
          </TrayCell>
          <TrayCell $w={13} />
          <TrayCell $w={28}>
            <svg width="16" height="9" viewBox="0 0 16 9" fill="none" stroke="#111" strokeWidth="1.400"><path d="M.8 8.200 8 1l7.200 7.200" /></svg>
          </TrayCell>
          <TrayCell>
            <svg width="22" height="19" viewBox="0 0 22 19"><path d="M5 15a4.500 4.500 0 0 1 0-8 6 6 0 0 1 11-1 4.500 4.500 0 0 1 1 9z" fill="#909090" stroke="#222" strokeWidth="1.300" /><path d="M1 1l19 17" stroke="#111" strokeWidth="1.600" /></svg>
          </TrayCell>
          <TrayCell>
            <svg width="16" height="20" viewBox="0 0 16 20" fill="none" stroke="#111" strokeWidth="1.300"><rect x="1.500" y="5" width="9" height="10" rx="2.500" /><path d="M10.500 9 14.500 6v8l-4-3M2 2q4-2.500 8 0M2 18q4 2.500 8 0" /></svg>
          </TrayCell>
          <TrayCell>
            <svg width="20" height="14" viewBox="0 0 20 14"><path d="M4 3h13v9H4z" fill="#111" stroke="#111" /><path d="M18 5h2v5h-2zM0 1h5v4H3v4H2V5H0z" fill="#111" /></svg>
          </TrayCell>
          <TrayCell>
            <svg width="20" height="18" viewBox="0 0 20 18" fill="none" stroke="#111" strokeWidth="1.300"><path d="M5 2h14v10H3V6M11 12v5M7 17h9M1 1h4v4H1z" /></svg>
          </TrayCell>
          <TrayCell $w={44}><Fit w={28}>ENG</Fit></TrayCell>
          <Clock>
            <Fit w={35}>17:26</Fit>
            <Fit w={75}>10-07-2023</Fit>
          </Clock>
          <TrayCell $w={52}>
            <svg width="32" height="34" viewBox="0 0 32 34">
              <path d="M2 2h20v17H12l-4 5v-5H2z" fill="#070707" />
              <path d="M5.500 7h13M5.500 11h13M5.500 15h9" stroke="#d6d6d6" strokeWidth="1.300" />
              <circle cx="21" cy="22" r="9.800" fill="#dedede" stroke="#8c8c8c" />
              <text x="21" y="27" textAnchor="middle" fontFamily="Open Sans" fontSize="14" fill="#111">8</text>
            </svg>
          </TrayCell>
          <DesktopEdge />
        </Tray>
      </Taskbar>
    </Screen>
  );
}
